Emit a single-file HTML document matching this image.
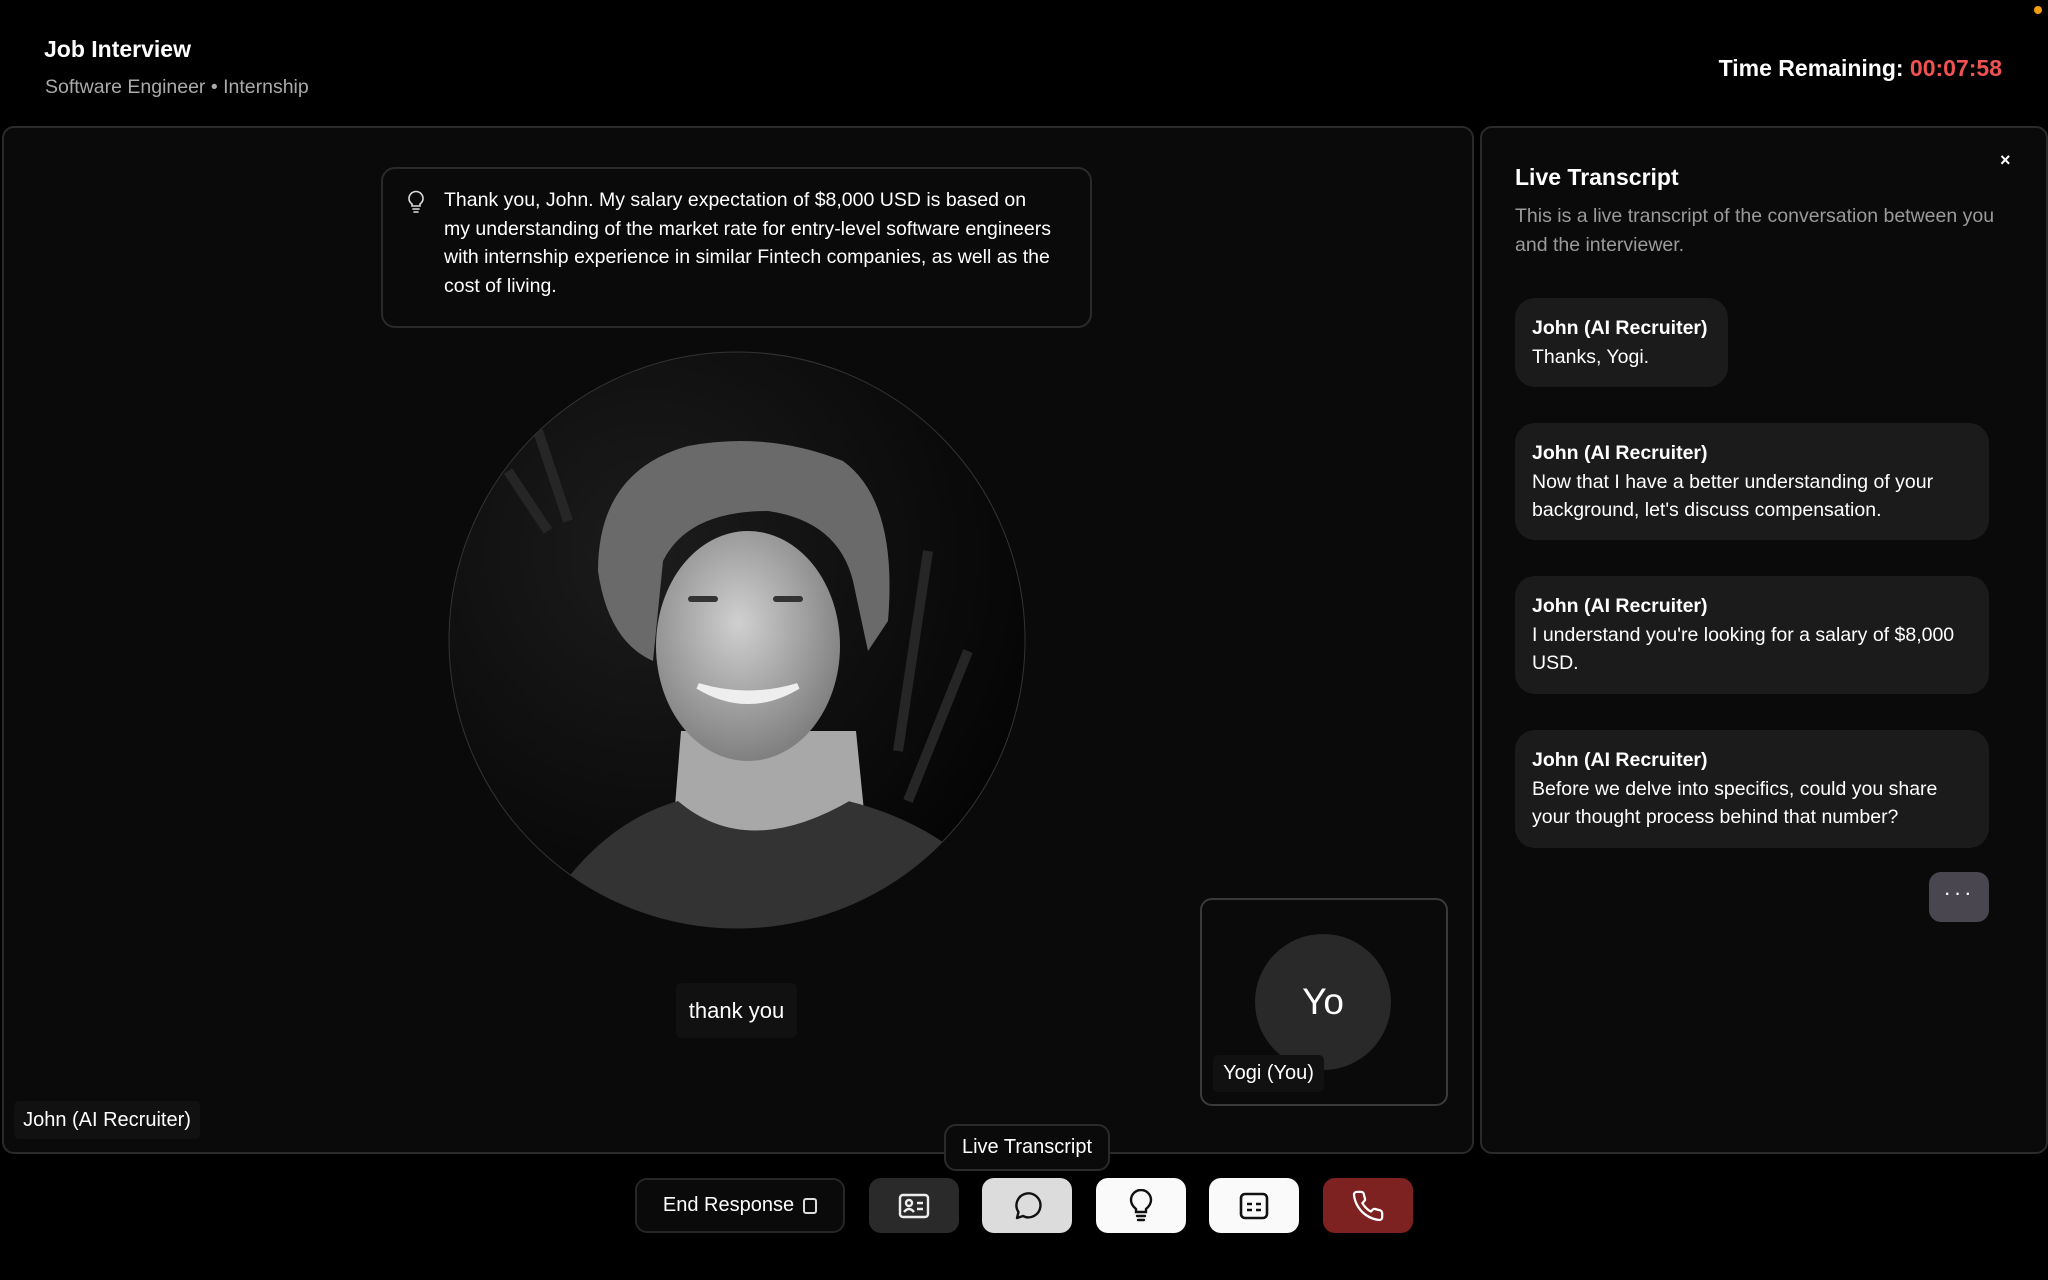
<!DOCTYPE html>
<html><head><meta charset="utf-8">
<style>
*{box-sizing:border-box;margin:0;padding:0}
body{width:2048px;height:1280px;background:#000;font-family:"Liberation Sans",sans-serif;color:#fff;position:relative;overflow:hidden}
.abs{position:absolute}
.panel{position:absolute;background:#0b0a0b;border:2px solid #2a2a2a;border-radius:12px}
.bubble{position:absolute;left:1515px;background:#1c1b1c;border-radius:20px;padding:16px 17px;font-size:19.5px;line-height:28.7px}
.bubble b{display:block}
.btn{position:absolute;top:1178px;height:55px;width:90px;border-radius:12px;display:flex;align-items:center;justify-content:center}
</style></head><body>
<div class="abs" style="right:6px;top:6px;width:8px;height:8px;border-radius:50%;background:#f59e0b"></div>
<div class="abs" style="left:44px;top:36px;font-size:23px;font-weight:800">Job Interview</div>
<div class="abs" style="left:45px;top:76px;font-size:19.5px;color:#aaa">Software Engineer • Internship</div>
<div class="abs" style="right:46px;top:55px;font-size:23px;font-weight:bold">Time Remaining: <span style="color:#f05252">00:07:58</span></div>

<div class="panel" style="left:2px;top:126px;width:1472px;height:1028px"></div>
<div class="panel" style="left:1480px;top:126px;width:568px;height:1028px"></div>

<div class="abs" style="left:381px;top:167px;width:711px;height:161px;border:2px solid #2a2a2a;border-radius:14px;background:#0b0a0b"></div>
<svg class="abs" style="left:405px;top:190px" width="22" height="24" viewBox="0 0 22 24" fill="none" stroke="#ddd" stroke-width="1.6" stroke-linecap="round"><path d="M7 14c-2-1.5-3-3.5-3-5.5a7 7 0 0 1 14 0c0 2-1 4-3 5.5v2H7z"/><path d="M8 19h6M9 22h4"/></svg>
<div class="abs" style="left:444px;top:186px;width:608px;font-size:19.5px;line-height:28.7px">Thank you, John. My salary expectation of $8,000 USD is based on my understanding of the market rate for entry-level software engineers with internship experience in similar Fintech companies, as well as the cost of living.</div>

<svg class="abs" style="left:448px;top:351px" width="578" height="578" viewBox="0 0 578 578">
<defs><clipPath id="c"><circle cx="289" cy="289" r="288"/></clipPath>
<radialGradient id="bg" cx="0.35" cy="0.35" r="0.7"><stop offset="0" stop-color="#1c1c1c"/><stop offset="1" stop-color="#050505"/></radialGradient>
<radialGradient id="face" cx="0.45" cy="0.4" r="0.6"><stop offset="0" stop-color="#d0d0d0"/><stop offset="1" stop-color="#808080"/></radialGradient></defs>
<g clip-path="url(#c)">
<rect width="578" height="578" fill="url(#bg)"/>
<path d="M60 120l40 60M90 80l30 90M480 200l-30 200M520 300l-60 150" stroke="#262626" stroke-width="10"/>
<path d="M233 380h175l10 100H225z" fill="#a8a8a8"/>
<path d="M100 600L110 540Q160 470 230 450Q300 500 400 450Q480 470 530 520L540 600z" fill="#333"/>
<path d="M230 450Q300 510 405 448L400 430Q300 480 235 432z" fill="#a8a8a8"/>
<ellipse cx="300" cy="295" rx="92" ry="115" fill="url(#face)"/>
<path d="M150 220Q150 120 240 95Q320 80 395 110Q450 150 440 270L420 300L405 230Q390 170 320 160Q240 160 215 210L205 310Q160 290 150 220z" fill="#6a6a6a"/>
<path d="M250 335Q300 365 350 335Q300 350 250 335z" fill="#eee" stroke="#eee" stroke-width="6"/>
<rect x="240" y="245" width="30" height="6" rx="3" fill="#333"/><rect x="325" y="245" width="30" height="6" rx="3" fill="#333"/>
</g>
<circle cx="289" cy="289" r="288" fill="none" stroke="#333" stroke-width="1"/>
</svg>

<div class="abs" style="left:676px;top:983px;width:121px;height:55px;background:#121112;border-radius:6px;display:flex;align-items:center;justify-content:center;font-size:22px">thank you</div>

<div class="abs" style="left:1200px;top:898px;width:248px;height:208px;border:2px solid #3a3a3a;border-radius:12px;background:#0b0a0b"></div>
<div class="abs" style="left:1255px;top:934px;width:136px;height:136px;border-radius:50%;background:#2a292a;display:flex;align-items:center;justify-content:center;font-size:37px">Yo</div>
<div class="abs" style="left:1213px;top:1055px;width:111px;height:37px;background:#121112;border-radius:5px;display:flex;align-items:center;justify-content:center;font-size:20px">Yogi (You)</div>

<div class="abs" style="left:14px;top:1101px;width:186px;height:38px;background:#121112;border-radius:5px;display:flex;align-items:center;justify-content:center;font-size:20px">John (AI Recruiter)</div>

<div class="abs" style="left:944px;top:1124px;width:166px;height:47px;background:#0b0a0b;border:2px solid #2a2a2a;border-radius:12px;display:flex;align-items:center;justify-content:center;font-size:20px">Live Transcript</div>

<div class="abs" style="left:635px;top:1178px;width:210px;height:55px;border:2px solid #262626;border-radius:12px;background:#0b0a0b;display:flex;align-items:center;justify-content:center;font-size:20px">End Response <span style="display:inline-block;width:14px;height:16px;border:2px solid #ddd;border-radius:3px;margin-left:9px"></span></div>
<div class="btn" style="left:869px;background:#2a2a2a"><svg width="32" height="26" viewBox="0 0 32 26" fill="none" stroke="#eee" stroke-width="2.4"><rect x="2" y="2" width="28" height="22" rx="3"/><circle cx="11" cy="10" r="3"/><path d="M6 19q5-6 10 0M19 10h6M19 16h6"/></svg></div>
<div class="btn" style="left:982px;background:#dcdcdc"><svg width="32" height="32" viewBox="0 0 32 32" fill="none" stroke="#111" stroke-width="2.4" stroke-linejoin="round"><path d="M6 28l1.5-6A12 12 0 1 1 12 26z"/></svg></div>
<div class="btn" style="left:1096px;background:#fafafa"><svg width="26" height="34" viewBox="0 0 26 34" fill="none" stroke="#111" stroke-width="2.4" stroke-linecap="round"><path d="M8 20c-3-2.5-5-5-5-9a10 10 0 0 1 20 0c0 4-2 6.5-5 9v3H8z"/><path d="M9 27h8M10 31h6"/></svg></div>
<div class="btn" style="left:1209px;background:#fafafa"><svg width="30" height="28" viewBox="0 0 30 28" fill="none" stroke="#111" stroke-width="2.6"><rect x="2" y="2" width="26" height="24" rx="4"/><path d="M8 12h5M17 12h5M8 18h5M17 18h5"/></svg></div>
<div class="btn" style="left:1323px;background:#7e2121"><svg width="34" height="34" viewBox="0 0 24 24" fill="none" stroke="#fff" stroke-width="1.6" stroke-linejoin="round"><path d="M22 16.9v3a2 2 0 0 1-2.2 2 19.8 19.8 0 0 1-8.6-3.1 19.5 19.5 0 0 1-6-6A19.8 19.8 0 0 1 2.1 4.2 2 2 0 0 1 4.1 2h3a2 2 0 0 1 2 1.7c.1 1 .4 1.900.7 2.8a2 2 0 0 1-.5 2.1L8 9.9a16 16 0 0 0 6 6l1.3-1.3a2 2 0 0 1 2.1-.4c.9.3 1.8.6 2.8.7a2 2 0 0 1 1.7 2z"/></svg></div>

<div class="abs" style="left:1515px;top:164px;font-size:23px;font-weight:800">Live Transcript</div>
<div class="abs" style="left:2000px;top:150px;font-size:18px;font-weight:bold">×</div>
<div class="abs" style="left:1515px;top:202px;width:510px;font-size:19.5px;line-height:28.7px;color:#9a9a9a">This is a live transcript of the conversation between you and the interviewer.</div>

<div class="bubble" style="top:298px;width:213px;height:89px"><b>John (AI Recruiter)</b>Thanks, Yogi.</div>
<div class="bubble" style="top:423px;width:474px;height:117px"><b>John (AI Recruiter)</b>Now that I have a better understanding of your background, let's discuss compensation.</div>
<div class="bubble" style="top:576px;width:474px;height:118px"><b>John (AI Recruiter)</b>I understand you're looking for a salary of $8,000 USD.</div>
<div class="bubble" style="top:730px;width:474px;height:118px"><b>John (AI Recruiter)</b>Before we delve into specifics, could you share your thought process behind that number?</div>
<div class="abs" style="left:1929px;top:872px;width:60px;height:50px;border-radius:12px;background:#4a4650;display:flex;align-items:center;justify-content:center;font-size:22px;letter-spacing:3px;padding-bottom:8px">···</div>
</body></html>
